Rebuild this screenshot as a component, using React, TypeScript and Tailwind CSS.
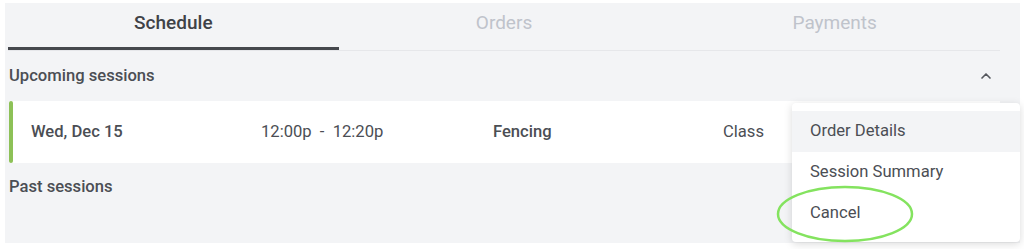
import { ChevronUp } from 'lucide-react';

const tabs = ['Schedule', 'Orders', 'Payments'];

export default function App() {
  return (
    <div className="h-[249px] bg-white pt-[3px] pl-[5px] font-['Roboto',sans-serif] text-[16.6px] text-[#4b4e54]">
      <div className="relative h-[240px] w-[1015px] bg-[#f3f4f6] pl-[3px]">
        {/* Tabs */}
        <div className="flex w-[992px] border-b border-[#e6e7ea]">
          {tabs.map((t, i) => (
            <div
              key={t}
              className={
                i === 0
                  ? 'flex h-[47px] flex-1 items-center justify-center border-b-[3px] border-[#45484d] pb-[3px] text-[19px] font-medium text-[#3f4247]'
                  : 'flex h-[47px] flex-1 items-center justify-center border-b-[3px] border-transparent pb-[3px] text-[19px] text-[#bfc3cb]'
              }
            >
              {t}
            </div>
          ))}
        </div>

        <div className="w-[992px] pl-[1px]">
          {/* Upcoming header */}
          <div className="flex h-[50px] items-center justify-between pr-[6px]">
            <span className="font-medium">Upcoming sessions</span>
            <ChevronUp size={16} strokeWidth={2.5} className="text-[#55585e]" />
          </div>

          {/* Session row */}
          <div className="flex h-[62px] items-center bg-white">
            <div className="h-full w-[4px] rounded-full bg-[#8dc157]" />
            <div className="flex items-center pl-[18px]">
              <div className="w-[230px] font-medium">Wed, Dec 15</div>
              <div className="w-[232px]">12:00p&nbsp; - &nbsp;12:20p</div>
              <div className="w-[230px] font-medium">Fencing</div>
              <div className="w-[70px]">Class</div>
            </div>
          </div>

          {/* Past header */}
          <div className="flex h-[48px] items-center">
            <span className="font-medium">Past sessions</span>
          </div>
        </div>

        {/* Dropdown menu */}
        <div className="absolute left-[787px] top-[100px] w-[228px] rounded-[4px] bg-white py-[8px] shadow-[0_2px_8px_rgba(0,0,0,0.15)]">
          <div className="flex h-[41px] items-center bg-[#f3f4f6] pl-[18px]">Order Details</div>
          <div className="flex h-[41px] items-center pl-[18px]">Session Summary</div>
          <div className="flex h-[41px] items-center pl-[18px]">Cancel</div>
        </div>

        {/* highlight circle */}
        <svg className="pointer-events-none absolute left-[768px] top-[180px]" width="144" height="62" viewBox="0 0 144 62">
          <ellipse cx="72" cy="31" rx="67" ry="27" fill="none" stroke="#84e35f" strokeWidth="2.5" />
        </svg>
      </div>
    </div>
  );
}
